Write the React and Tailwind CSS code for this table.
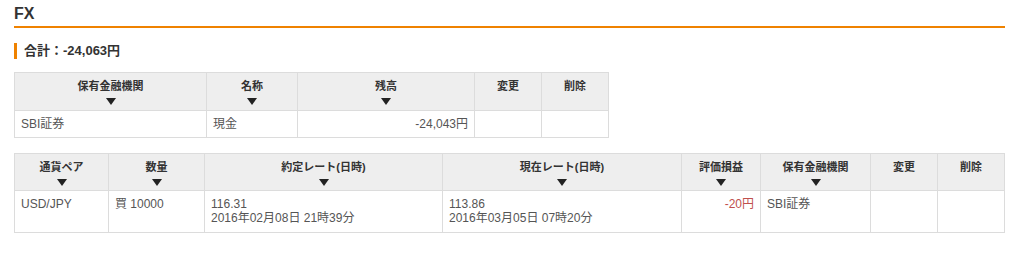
const FONT = { fontFamily: '"Liberation Sans", "Noto Sans CJK JP", sans-serif' };

function Arrow() {
  return (
    <svg width="10" height="7" viewBox="0 0 10 7" className="mx-auto mt-[5px] block">
      <path d="M0 0 L10 0 L5 7 Z" fill="#222" />
    </svg>
  );
}

function Th({ label, sort = true, w }) {
  return (
    <th
      className={`border border-[#dcdcdc] bg-[#eeeeee] align-top pt-[7px] text-[11px] font-bold leading-[13px] text-[#333] ${w}`}
    >
      {label}
      {sort && <Arrow />}
    </th>
  );
}

const holdings = [{ bank: "SBI証券", name: "現金", amount: "-24,043円" }];

const positions = [
  {
    pair: "USD/JPY",
    qty: "買 10000",
    openRate: "116.31",
    openAt: "2016年02月08日 21時39分",
    nowRate: "113.86",
    nowAt: "2016年03月05日 07時20分",
    pl: "-20円",
    bank: "SBI証券",
  },
];

export default function App() {
  return (
    <main className="min-h-screen bg-white px-[14px] pt-[4px] text-[#333]" style={FONT}>
      <div className="mr-[5px]">
        <h1 className="border-b-2 border-[#ef8200] pb-[3px] text-[16px] font-bold leading-[19px]">FX</h1>

        <div className="mt-[15px] flex h-[16px] items-center">
          <span className="h-[16px] w-[3px] bg-[#ef8200]" />
          <span className="ml-[7px] text-[13px] font-bold">合計：-24,063円</span>
        </div>

        <table className="mt-[13px] table-fixed border-collapse">
          <thead>
            <tr className="h-[38px]">
              <Th label="保有金融機関" w="w-[192px]" />
              <Th label="名称" w="w-[91px]" />
              <Th label="残高" w="w-[177px]" />
              <Th label="変更" sort={false} w="w-[67px]" />
              <Th label="削除" sort={false} w="w-[67px]" />
            </tr>
          </thead>
          <tbody>
            {holdings.map((h) => (
              <tr key={h.name} className="h-[27px] text-[12px] text-[#555]">
                <td className="border border-[#dcdcdc] px-[6px]">{h.bank}</td>
                <td className="border border-[#dcdcdc] px-[6px]">{h.name}</td>
                <td className="border border-[#dcdcdc] px-[6px] text-right">{h.amount}</td>
                <td className="border border-[#dcdcdc]" />
                <td className="border border-[#dcdcdc]" />
              </tr>
            ))}
          </tbody>
        </table>

        <table className="mt-[15px] w-[990px] table-fixed border-collapse">
          <thead>
            <tr className="h-[37px]">
              <Th label="通貨ペア" w="w-[94px]" />
              <Th label="数量" w="w-[96px]" />
              <Th label="約定レート(日時)" w="w-[238px]" />
              <Th label="現在レート(日時)" w="w-[239px]" />
              <Th label="評価損益" w="w-[79px]" />
              <Th label="保有金融機関" w="w-[110px]" />
              <Th label="変更" sort={false} w="w-[67px]" />
              <Th label="削除" sort={false} w="w-[67px]" />
            </tr>
          </thead>
          <tbody>
            {positions.map((p) => (
              <tr key={p.pair} className="h-[42px] align-top text-[12px] leading-[14px] text-[#555]">
                <td className="border border-[#dcdcdc] px-[6px] pt-[6px]">{p.pair}</td>
                <td className="border border-[#dcdcdc] px-[6px] pt-[6px]">{p.qty}</td>
                <td className="border border-[#dcdcdc] px-[6px] pt-[6px]">
                  {p.openRate}
                  <br />
                  {p.openAt}
                </td>
                <td className="border border-[#dcdcdc] px-[6px] pt-[6px]">
                  {p.nowRate}
                  <br />
                  {p.nowAt}
                </td>
                <td className="border border-[#dcdcdc] px-[6px] pt-[6px] text-right text-[#c0504d]">{p.pl}</td>
                <td className="border border-[#dcdcdc] px-[6px] pt-[6px]">{p.bank}</td>
                <td className="border border-[#dcdcdc]" />
                <td className="border border-[#dcdcdc]" />
              </tr>
            ))}
          </tbody>
        </table>
      </div>
    </main>
  );
}
